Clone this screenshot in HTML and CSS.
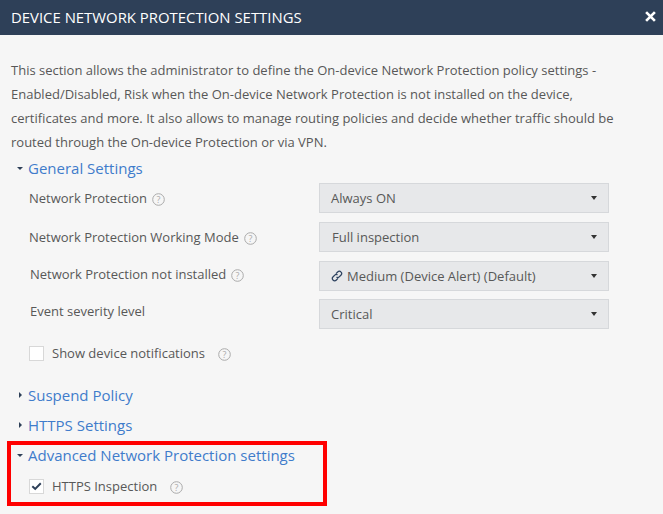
FILE: index.html
```html
<!DOCTYPE html>
<html lang="en">
<head>
<meta charset="utf-8">
<title>Device Network Protection Settings</title>
<link rel="stylesheet" href="styles.css">
</head>
<body>
<div class="dialog">
  <header class="head">
    <span class="title">DEVICE NETWORK PROTECTION SETTINGS</span>
    <svg class="close" viewBox="0 0 10 10" width="11" height="11"><path d="M1 1L9 9M9 1L1 9" stroke="#fff" stroke-width="2.4" fill="none"/></svg>
  </header>
  <main class="content">
    <p class="intro">This section allows the administrator to define the On-device Network Protection policy settings - Enabled/Disabled, Risk when the On-device Network Protection is not installed on the device, certificates and more. It also allows to manage routing policies and decide whether traffic should be routed through the On-device Protection or via VPN.</p>

    <h2 class="section first"><span class="caret-down"></span>General Settings</h2>
    <div class="rows">
      <div class="row r1">
        <span class="label">Network Protection<svg class="help" viewBox="0 0 13 13" width="13" height="13"><circle cx="6.5" cy="6.5" r="5.8" fill="none" stroke="#aaa"/><text x="6.5" y="9.6" text-anchor="middle" class="q">?</text></svg></span>
        <div class="select"><span>Always ON</span><i class="arrow"></i></div>
      </div>
      <div class="row r2">
        <span class="label">Network Protection Working Mode<svg class="help" viewBox="0 0 13 13" width="13" height="13"><circle cx="6.5" cy="6.5" r="5.8" fill="none" stroke="#aaa"/><text x="6.5" y="9.6" text-anchor="middle" class="q">?</text></svg></span>
        <div class="select"><span class="nudge">Full inspection</span><i class="arrow"></i></div>
      </div>
      <div class="row r3">
        <span class="label shift">Network Protection not installed<svg class="help" viewBox="0 0 13 13" width="13" height="13"><circle cx="6.5" cy="6.5" r="5.8" fill="none" stroke="#aaa"/><text x="6.5" y="9.6" text-anchor="middle" class="q">?</text></svg></span>
        <div class="select"><span class="with-icon"><svg class="link" viewBox="0 0 12 12" width="12" height="12"><g fill="none" stroke="#2e4360" stroke-width="1.3"><path d="M5 3.6L6.9 1.8a2 2 0 0 1 2.9 0l.3.3a2 2 0 0 1 0 2.9L8.2 6.9a2 2 0 0 1-2.7.1"/><path d="M7 8.4L5.1 10.2a2 2 0 0 1-2.9 0l-.3-.3a2 2 0 0 1 0-2.9L3.8 5.1a2 2 0 0 1 2.7-.1"/></g></svg>Medium (Device Alert) (Default)</span><i class="arrow"></i></div>
      </div>
      <div class="row r4">
        <span class="label shift">Event severity level</span>
        <div class="select"><span>Critical</span><i class="arrow"></i></div>
      </div>
    </div>
    <div class="check notif">
      <span class="box"></span>
      <span class="check-label">Show device notifications</span>
      <svg class="help wide" viewBox="0 0 13 13" width="13" height="13"><circle cx="6.5" cy="6.5" r="5.8" fill="none" stroke="#aaa"/><text x="6.5" y="9.6" text-anchor="middle" class="q">?</text></svg>
    </div>

    <h2 class="section s2"><span class="caret-right"></span>Suspend Policy</h2>
    <h2 class="section s3"><span class="caret-right"></span>HTTPS Settings</h2>

    <div class="focus">
      <h2 class="section s4"><span class="caret-down"></span>Advanced Network Protection settings</h2>
      <div class="check inspect">
        <span class="box"><svg viewBox="0 0 14 14" width="14" height="14"><path d="M2.5 7.2L5.6 10.2L11.6 4" fill="none" stroke="#2d3f58" stroke-width="2.1"/></svg></span>
        <span class="check-label">HTTPS Inspection</span>
        <svg class="help wide" viewBox="0 0 13 13" width="13" height="13"><circle cx="6.5" cy="6.5" r="5.8" fill="none" stroke="#aaa"/><text x="6.5" y="9.6" text-anchor="middle" class="q">?</text></svg>
      </div>
    </div>
  </main>
</div>
</body>
</html>
```

FILE: styles.css
```css
* { box-sizing: border-box; }
html, body { margin: 0; padding: 0; height: 100%; }
body {
  background: #f6f6f6;
  font-family: "Open Sans", "Liberation Sans", sans-serif;
  font-size: 13px;
  color: #585858;
  overflow: hidden;
}
.head {
  height: 35px;
  background: #2e4058;
  color: #fff;
  display: flex;
  align-items: center;
  justify-content: space-between;
  padding: 0 7px 0 11px;
}
.title { font-size: 14.9px; line-height: 35px; }
.close { margin-top: -3px; }
.content { padding: 23px 0 0 0; }
.intro {
  margin: 0;
  padding: 0 11px;
  width: 640px;
  line-height: 24px;
}
.section {
  margin: 0;
  font-size: 15px;
  font-weight: 400;
  line-height: 20px;
  color: #3f7ccb;
  padding-left: 28px;
  position: relative;
}
.first { margin-top: 4px; }
.caret-down, .caret-right { position: absolute; width: 0; height: 0; }
.caret-down {
  left: 17px; top: 9px;
  border-left: 3px solid transparent;
  border-right: 3px solid transparent;
  border-top: 3px solid #2e4058;
}
.caret-right {
  left: 19px; top: 7px;
  border-top: 3px solid transparent;
  border-bottom: 3px solid transparent;
  border-left: 3px solid #2e4058;
}
.rows { margin-top: 5px; }
.row {
  display: flex;
  justify-content: space-between;
  align-items: center;
  width: 609px;
  padding-left: 29px;
  height: 30px;
}
.r2, .r3 { margin-top: 9px; }
.r4 { margin-top: 8px; }
.label { display: flex; align-items: center; }
.shift { padding-left: 1px; }
.r3 .label { margin-bottom: 4px; }
.r4 .label { margin-bottom: 6px; }
.label .help { margin-left: 5px; margin-top: 2px; }
.help { flex: none; }
.q { font-size: 9px; fill: #aaa; font-family: "Open Sans", sans-serif; }
.select {
  width: 290px;
  height: 30px;
  background: #e7e8ea;
  border: 1px solid #d6d8db;
  display: flex;
  align-items: center;
  justify-content: space-between;
  padding: 0 12px 0 11px;
}
.nudge { margin-left: 1px; }
.with-icon { display: flex; align-items: center; }
.link { margin-right: 4px; }
.arrow {
  width: 0; height: 0;
  border-left: 3.5px solid transparent;
  border-right: 3.5px solid transparent;
  border-top: 4px solid #333;
  margin-right: -1px;
}
.check { display: flex; align-items: center; padding-left: 29px; height: 16px; }
.box {
  width: 15px; height: 15px;
  background: #fff;
  border: 1px solid #d8d8d8;
  display: flex; align-items: center; justify-content: center;
  flex: none;
}
.check-label { margin-left: 8px; }
.help.wide { margin-left: 13px; margin-top: 2px; }
.notif { margin-top: 16px; }
.s2 { margin-top: 24px; }
.s3 { margin-top: 10px; }
.focus {
  margin: 6px 0 0 7px;
  width: 320px;
  height: 65px;
  border: 4px solid #f00;
  position: relative;
}
.s4 { margin: 0 0 0 -4px; padding-left: 21px; }
.s4 .caret-down { left: 10px; }
.inspect { margin: 13px 0 0 -4px; padding-left: 22px; }
```
